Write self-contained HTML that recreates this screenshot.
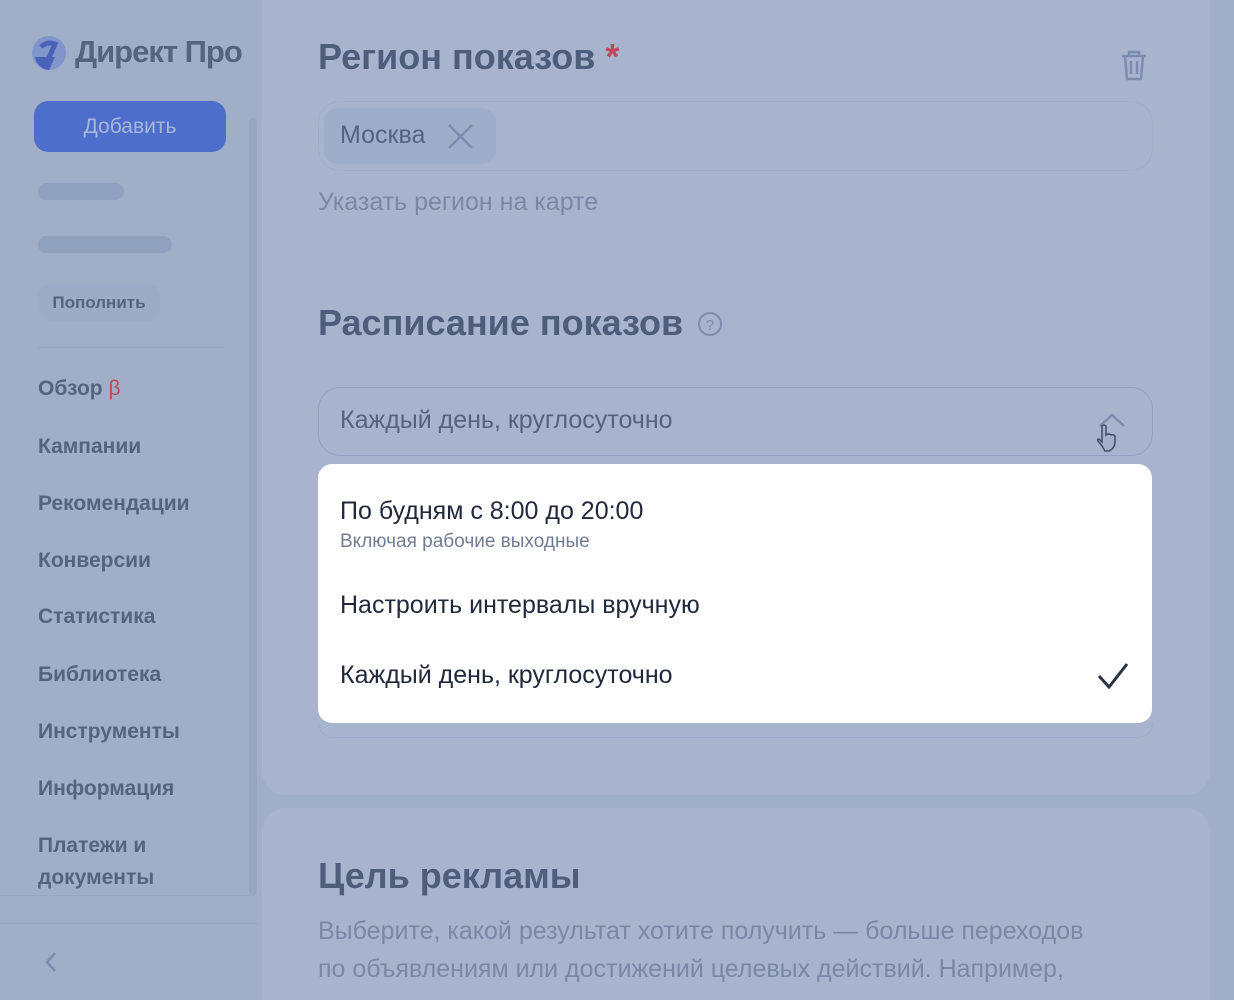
<!DOCTYPE html>
<html><head><meta charset="utf-8"><style>
*{margin:0;padding:0;box-sizing:border-box}
html,body{width:1234px;height:1000px;overflow:hidden}
body{background:#a1aec8;font-family:"Liberation Sans","Noto Sans CJK SC",sans-serif;position:relative}
.a{position:absolute}
.side{color:#56637f;font-size:21px;font-weight:bold}
.card{background:#a8b4cd;border-radius:24px}
</style></head><body>
<svg class="a" style="left:31px;top:35px" width="36" height="36" viewBox="0 0 36 36"><circle cx="18" cy="18" r="17" fill="#7f95cc"/><path d="M4 22 A15 15 0 0 0 18 35 L24 22 Z" fill="#4a63b8"/><path d="M10 12 Q16 6 24 9 L14 32" stroke="#4a63b8" stroke-width="5" fill="none"/></svg>
<div class="a" style="left:75px;top:34px;font-size:31px;font-weight:bold;color:#56637f;letter-spacing:-1px">Директ Про</div>
<div class="a" style="left:34px;top:101px;width:192px;height:51px;border-radius:14px;background:#4e6ecb;color:#a9b7d8;font-size:21px;text-align:center;line-height:51px">Добавить</div>
<div class="a" style="left:38px;top:183px;width:86px;height:17px;border-radius:9px;background:#90a0bf"></div>
<div class="a" style="left:38px;top:236px;width:134px;height:17px;border-radius:9px;background:#90a0bf"></div>
<div class="a" style="left:38px;top:284px;width:122px;height:37px;border-radius:12px;background:#9cabc6;color:#56637f;font-size:17px;font-weight:bold;text-align:center;line-height:37px">Пополнить</div>
<div class="a" style="left:38px;top:347px;width:186px;height:1px;background:#97a5c0"></div>
<div class="a side" style="left:38px;top:377px">Обзор <span style="color:#c0485a;font-weight:normal">β</span></div>
<div class="a side" style="left:38px;top:435px">Кампании</div>
<div class="a side" style="left:38px;top:492px">Рекомендации</div>
<div class="a side" style="left:38px;top:549px">Конверсии</div>
<div class="a side" style="left:38px;top:605px">Статистика</div>
<div class="a side" style="left:38px;top:663px">Библиотека</div>
<div class="a side" style="left:38px;top:720px">Инструменты</div>
<div class="a side" style="left:38px;top:777px">Информация</div>
<div class="a side" style="left:38px;top:830px;line-height:32px">Платежи и<br>документы</div>
<div class="a" style="left:249px;top:118px;width:8px;height:778px;border-radius:4px;background:#98a6c0"></div>
<div class="a" style="left:0;top:895px;width:250px;height:1px;background:#97a5c0"></div>
<div class="a" style="left:0;top:923px;width:258px;height:1px;background:#97a5c0"></div>
<svg class="a" style="left:42px;top:950px" width="16" height="24"><path d="M13 3 L5 12 L13 21" stroke="#7c8cb0" stroke-width="2.5" fill="none"/></svg>
<div class="a card" style="left:262px;top:-30px;width:948px;height:825px"></div>
<div class="a card" style="left:262px;top:808px;width:948px;height:192px;border-radius:24px 24px 0 0"></div>
<div class="a" style="left:318px;top:36px;font-size:36px;font-weight:bold;color:#4e5d7b">Регион показов <span style="color:#c0485a">*</span></div>
<svg class="a" style="left:1120px;top:48px" width="28" height="34" viewBox="0 0 28 34"><g stroke="#7c8cb0" stroke-width="2.5" fill="none"><path d="M2 8 H26 M9 8 V4 H19 V8 M5 8 L7 31 H21 L23 8 M11 13 V26 M17 13 V26"/></g></svg>
<div class="a" style="left:318px;top:101px;width:835px;height:70px;border-radius:22px;border:1.5px solid #9faccb"></div>
<div class="a" style="left:324px;top:108px;width:172px;height:56px;border-radius:14px;background:#9eadc9"></div>
<div class="a" style="left:340px;top:121px;font-size:25px;color:#56637f">Москва</div>
<svg class="a" style="left:447px;top:123px" width="27" height="27"><path d="M2 2 L25 25 M25 2 L2 25" stroke="#7c8cb0" stroke-width="2.5"/></svg>
<div class="a" style="left:318px;top:188px;font-size:25px;color:#7a88a6">Указать регион на карте</div>
<div class="a" style="left:318px;top:302px;font-size:36px;font-weight:bold;color:#4e5d7b">Расписание показов</div>
<svg class="a" style="left:697px;top:311px" width="26" height="26"><circle cx="13" cy="13" r="11" stroke="#7c8cb0" stroke-width="2" fill="none"/><text x="13" y="19" font-size="15" text-anchor="middle" fill="#7c8cb0" font-family="Liberation Sans">?</text></svg>
<div class="a" style="left:318px;top:387px;width:835px;height:69px;border-radius:22px;border:1.5px solid #93a2c0"></div>
<div class="a" style="left:340px;top:406px;font-size:25px;color:#56637f">Каждый день, круглосуточно</div>
<svg class="a" style="left:1088px;top:410px" width="44" height="45"><path d="M12 16 L24 5 L36 16" stroke="#7c8cb0" stroke-width="2.5" fill="none"/><path d="M14 36 L10 31 Q9 29 11 29 L14 32 V16 Q16 14 18 16 V25 Q21 23 23 25 Q25 24 27 26 V33 Q26 39 21 41 H17 Z" fill="#a3b0c9" stroke="#3f4c66" stroke-width="1.5"/></svg>
<div class="a" style="left:318px;top:723px;width:835px;height:15px;border-radius:0 0 22px 22px;border:1.5px solid #9faccb;border-top:none"></div>
<div class="a" style="left:318px;top:464px;width:834px;height:259px;border-radius:14px;background:#fff"></div>
<div class="a" style="left:340px;top:497px;font-size:25px;color:#21293b">По будням с 8:00 до 20:00</div>
<div class="a" style="left:340px;top:531px;font-size:19px;color:#717c93">Включая рабочие выходные</div>
<div class="a" style="left:340px;top:591px;font-size:25px;color:#21293b">Настроить интервалы вручную</div>
<div class="a" style="left:340px;top:661px;font-size:25px;color:#21293b">Каждый день, круглосуточно</div>
<svg class="a" style="left:1096px;top:661px" width="34" height="30"><path d="M3 15 L13 26 L31 3" stroke="#2a3245" stroke-width="3" fill="none"/></svg>
<div class="a" style="left:318px;top:855px;font-size:36px;font-weight:bold;color:#4e5d7b">Цель рекламы</div>
<div class="a" style="left:318px;top:912px;font-size:25px;color:#7a88a6;line-height:38px;white-space:nowrap">Выберите, какой результат хотите получить — больше переходов<br>по объявлениям или достижений целевых действий. Например,</div>
</body></html>
